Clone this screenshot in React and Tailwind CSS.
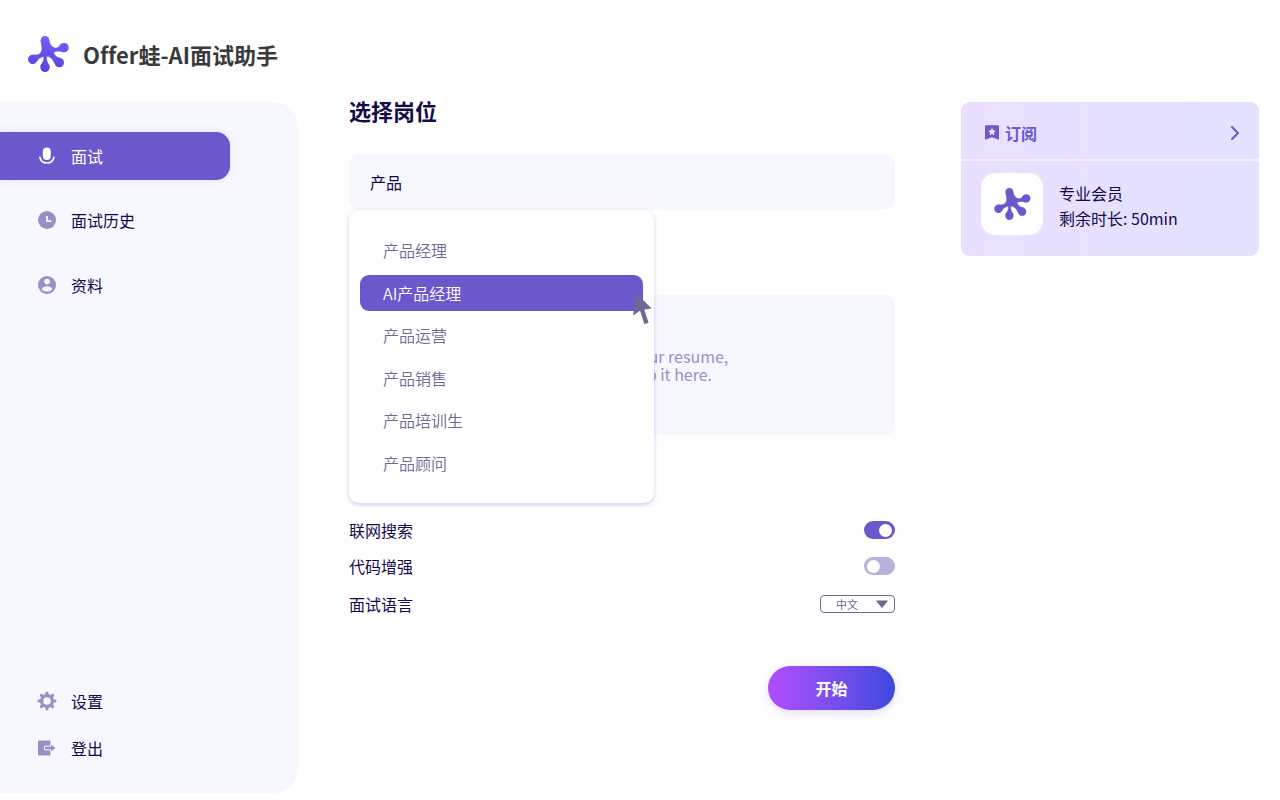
import { useState } from "react";
import clsx from "clsx";
import { ChevronRight } from "lucide-react";

const JOBS = [
  "产品经理",
  "AI产品经理",
  "产品运营",
  "产品销售",
  "产品培训生",
  "产品顾问",
];

function Logo({ gradient, className }) {
  const fill = gradient ? "url(#logo-fill)" : "#6d57cd";
  return (
    <svg viewBox="23 19 123 108" className={className} aria-hidden="true">
      {gradient && (
        <defs>
          <linearGradient id="logo-fill" x1="0" y1="19" x2="0" y2="127" gradientUnits="userSpaceOnUse">
            <stop offset="0" stopColor="#7c5cfc" />
            <stop offset="1" stopColor="#5244dc" />
          </linearGradient>
        </defs>
      )}
      <g fill={fill}>
        <circle cx="74" cy="32" r="13" />
        <circle cx="131" cy="54" r="14" />
        <circle cx="117" cy="99" r="14" />
        <circle cx="74" cy="113" r="14" />
        <circle cx="37" cy="89" r="14" />
        <path
          d="M62 32C63 46 67 54 64 64C61 74 52 77 38 76L50 94C54 86 62 82 71 80C72 90 68 98 61 108L87 108C80 98 77 90 79 80C90 80 97 88 104 102L121 86C108 83 101 77 100 67C110 64 118 63 128 67L121 45C114 56 104 58 97 52C91 47 88 42 86 32Z"
          stroke={fill}
          strokeWidth="2"
        />
      </g>
    </svg>
  );
}

function MicIcon() {
  return (
    <svg width="18" height="18" viewBox="0 0 18 18" fill="none" aria-hidden="true">
      <rect x="4.8" y="0.5" width="8" height="12.6" rx="4" fill="currentColor" />
      <path d="M1.9 10.4C2.6 13.9 5.3 16 8.9 16s6.3-2.1 7-5.6" stroke="currentColor" strokeWidth="1.7" strokeLinecap="round" />
    </svg>
  );
}

function ClockIcon() {
  return (
    <svg width="18" height="18" viewBox="0 0 18 18" aria-hidden="true">
      <circle cx="9" cy="9" r="9" fill="currentColor" />
      <path d="M9 4.9v5.3h4.5" fill="none" stroke="#f7f7ff" strokeWidth="1.8" />
    </svg>
  );
}

function UserIcon() {
  return (
    <svg width="18" height="18" viewBox="0 0 18 18" aria-hidden="true">
      <circle cx="9" cy="9" r="9" fill="currentColor" />
      <circle cx="9" cy="5.6" r="2.8" fill="#f7f7ff" />
      <path d="M3.6 12.9C4.6 10.9 6.9 10.2 9 10.2s4.4.7 5.4 2.7C13.2 14.7 11.3 15.5 9 15.5s-4.2-.8-5.4-2.6Z" fill="#f7f7ff" />
    </svg>
  );
}

function GearIcon() {
  return (
    <svg width="20" height="20" viewBox="0 0 20 20" className="shrink-0" aria-hidden="true">
      <circle cx="10" cy="10" r="5.4" fill="none" stroke="currentColor" strokeWidth="3.2" />
      {[0, 45, 90, 135, 180, 225, 270, 315].map((deg) => (
        <path key={deg} d="M8.2 3.8L8.8.7h2.4L11.8 3.8Z" fill="currentColor" transform={`rotate(${deg} 10 10)`} />
      ))}
    </svg>
  );
}

function LogoutIcon() {
  return (
    <svg width="18" height="16" viewBox="0 0 18 16" aria-hidden="true">
      <rect x="0" y="0.5" width="12.5" height="15" rx="1.2" fill="currentColor" />
      <path d="M6.5 6.2h6.3V3.7L18 8l-5.2 4.3V9.8H6.5Z" fill="currentColor" stroke="#f7f7ff" strokeWidth="1" />
    </svg>
  );
}

function BookmarkIcon() {
  return (
    <svg width="14" height="15" viewBox="0 0 14 15" aria-hidden="true">
      <path d="M1.3.3h11.4c.7 0 1.3.5 1.3 1.2v13.2L7 12.3 0 14.7V1.5C0 .8.6.3 1.3.3Z" fill="#6d57cd" />
      <path d="M7 2.8l1.2 2.5 2.7.4-2 1.9.5 2.7L7 9l-2.4 1.3.5-2.7-2-1.9 2.7-.4Z" fill="#efe8ff" />
    </svg>
  );
}

function NavItem({ icon, label, active, className }) {
  return (
    <a
      href="#"
      className={clsx(
        "flex items-center gap-[15px] pl-[38px]",
        active
          ? "mr-[68px] rounded-r-[14px] bg-[#6d57cd] text-white shadow-[0_0_8px_rgba(109,87,205,0.12)]"
          : "text-[#150a4a]",
        className
      )}
    >
      <span className={clsx("flex w-[18px] justify-center", !active && "text-[#9a8fc2]")}>
        {icon}
      </span>
      {label}
    </a>
  );
}

function Toggle({ id, label, checked, onChange }) {
  return (
    <div className="flex h-9 items-center justify-between">
      <label htmlFor={id}>{label}</label>
      <input
        id={id}
        type="checkbox"
        checked={checked}
        onChange={(e) => onChange(e.target.checked)}
        className="flex h-[18px] w-[31px] cursor-pointer appearance-none items-center rounded-full bg-[#b9b0db] px-[3px] before:size-[13px] before:rounded-full before:bg-white checked:justify-end checked:bg-[#6d57cd]"
      />
    </div>
  );
}

export default function App() {
  const [keyword, setKeyword] = useState("产品");
  const [selected, setSelected] = useState("AI产品经理");
  const [webSearch, setWebSearch] = useState(true);
  const [codeBoost, setCodeBoost] = useState(false);

  return (
    <div className="flex min-h-screen flex-col bg-white font-['Noto_Sans_CJK_SC',sans-serif] text-base text-[#150a4a] [font-variant-ligatures:none]">
      <header className="flex h-[102px] items-center gap-[14px] pt-[5px] pl-7">
        <Logo gradient className="h-9 w-[41px]" />
        <span className="text-[22px] leading-8 font-bold text-[#3a3a3a]">Offer蛙-AI面试助手</span>
      </header>

      <div className="flex flex-1">
        <aside className="mb-[7px] flex w-[298px] shrink-0 flex-col justify-between rounded-r-3xl bg-[#f7f7ff] pt-[30px] pb-[22px]">
          <nav className="flex flex-col gap-4">
            <NavItem active icon={<MicIcon />} label="面试" className="h-12" />
            <NavItem icon={<ClockIcon />} label="面试历史" className="h-12" />
            <NavItem icon={<UserIcon />} label="资料" className="h-[50px]" />
          </nav>
          <div className="flex flex-col">
            <NavItem icon={<GearIcon />} label="设置" className="h-[47px]" />
            <NavItem icon={<LogoutIcon />} label="登出" className="h-[47px]" />
          </div>
        </aside>

        <main className="flex flex-1 flex-col pr-[66px] pl-[51px]">
          <h1 className="text-[22px] leading-4 font-bold">选择岗位</h1>

          <div className="relative mt-9">
            <input
              type="text"
              aria-label="选择岗位"
              value={keyword}
              onChange={(e) => setKeyword(e.target.value)}
              className="block h-14 w-full rounded-[10px] bg-[#f7f7ff] px-[21px] outline-none"
            />
            <ul className="absolute top-full left-0 z-10 flex h-[293px] w-[305px] flex-col justify-between rounded-[10px] bg-white px-[11px] py-[22px] shadow-[0_2px_5px_rgba(109,87,205,0.3)]">
              {JOBS.map((job) => (
                <li key={job} className="relative">
                  <button
                    type="button"
                    onClick={() => setSelected(job)}
                    className={clsx(
                      "flex h-9 w-full cursor-pointer items-center rounded-[9px] px-[23px] font-[350]",
                      job === selected ? "bg-[#6d57cd] text-white" : "text-[#6f6893]"
                    )}
                  >
                    {job}
                  </button>
                  {job === selected && (
                    <svg
                      viewBox="71 68 57 94"
                      className="absolute top-[18px] -right-[9px] h-[31px] w-[19px]"
                      aria-hidden="true"
                    >
                      <path d="M80 68L127 115L105 118L118 158L105 162L92 122L71 136Z" fill="#6f6893" />
                    </svg>
                  )}
                </li>
              ))}
            </ul>
          </div>

          <button
            type="button"
            className="mt-[85px] h-[140px] w-full cursor-pointer rounded-[10px] bg-[#f7f7ff] leading-[18px] text-[#9a8fc2]"
          >
            Click to upload your resume,
            <br />
            or drag and drop it here.
          </button>

          <div className="mt-[77px] flex flex-col">
            <Toggle id="web-search" label="联网搜索" checked={webSearch} onChange={setWebSearch} />
            <Toggle id="code-boost" label="代码增强" checked={codeBoost} onChange={setCodeBoost} />
            <div className="flex h-10 items-center justify-between">
              <label htmlFor="language">面试语言</label>
              <div className="relative flex items-center">
                <select
                  id="language"
                  className="h-[18px] w-[75px] appearance-none rounded-[4px] border border-[#6f6893] pl-[15px] text-[11px] leading-4 text-[#6f6893]"
                >
                  <option>中文</option>
                  <option>English</option>
                </select>
                <svg
                  viewBox="0 0 12 8"
                  className="pointer-events-none absolute right-[7px] h-2 w-3"
                  aria-hidden="true"
                >
                  <path d="M.8.5h10.4a.5.5 0 0 1 .4.8L6.5 7.5a.6.6 0 0 1-1 0L.4 1.3A.5.5 0 0 1 .8.5Z" fill="#6f6893" />
                </svg>
              </div>
            </div>
          </div>

          <button
            type="button"
            className="mt-[42px] h-11 w-[127px] cursor-pointer self-end rounded-full bg-linear-to-r from-[#b14dff] to-[#3d48df] font-bold text-white shadow-[0_3px_10px_rgba(109,87,255,0.2)]"
          >
            开始
          </button>
        </main>

        <aside className="mr-[21px] w-[298px] shrink-0">
          <div className="rounded-[9px] bg-linear-to-r from-[#ebdfff] to-[#e2e2ff]">
            <a
              href="#"
              className="flex h-[59px] items-center border-b-2 border-[#f4f0ff] px-6 pt-1 font-bold text-[#6d57cd]"
            >
              <BookmarkIcon />
              <span className="ml-[6px] flex-1">订阅</span>
              <ChevronRight className="-mr-3 size-6" />
            </a>
            <div className="flex items-center gap-4 px-5 pt-3 pb-[21px]">
              <div className="flex size-[62px] items-center justify-center rounded-[14px] bg-white">
                <Logo className="h-8 w-[37px]" />
              </div>
              <div className="pt-[3px] leading-[25px]">
                <p>专业会员</p>
                <p>剩余时长: 50min</p>
              </div>
            </div>
          </div>
        </aside>
      </div>
    </div>
  );
}
